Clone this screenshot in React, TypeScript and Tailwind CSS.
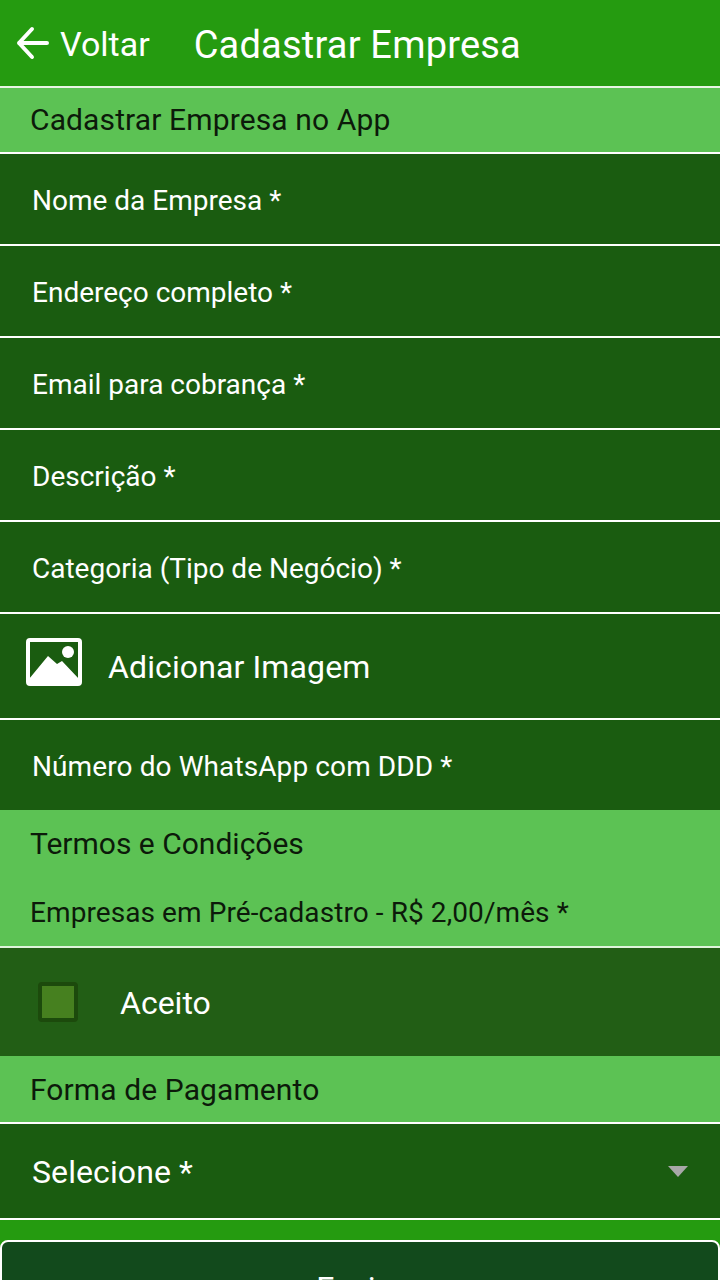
const FIELDS_TOP = [
  'Nome da Empresa *',
  'Endereço completo *',
  'Email para cobrança *',
  'Descrição *',
  'Categoria (Tipo de Negócio) *',
]

function Field({ label }: { label: string }) {
  return (
    <div className="flex h-[92px] items-center border-b-2 border-white bg-[#1a5c10] pl-8 pt-1 text-[28px] leading-none text-white">
      {label}
    </div>
  )
}

function ImageIcon() {
  return (
    <svg className="mb-2" width="56" height="48" viewBox="0 0 56 48">
      <rect x="2" y="2" width="52" height="44" rx="2" fill="none" stroke="#fff" strokeWidth="4" />
      <circle cx="42" cy="14" r="6" fill="#fff" />
      <path d="M3 41L22 18L31 26L36 23L53 41V46H3Z" fill="#fff" />
    </svg>
  )
}

export default function App() {
  return (
    <div className="h-[1280px] w-[720px] overflow-hidden bg-[#259b10] font-['Roboto',sans-serif]">
      {/* Header */}
      <div className="flex h-[88px] items-center border-b-2 border-[#e8f5e4] text-white">
        <svg className="ml-[16px]" width="34" height="34" viewBox="0 0 34 34" fill="none" stroke="#fff" strokeWidth="4" strokeLinecap="round" strokeLinejoin="round">
          <path d="M31 17H3M16 3L3 17L16 31" />
        </svg>
        <span className="ml-[10px] mt-[2px] text-[34px] leading-none">Voltar</span>
        <span className="ml-[44px] mt-[3px] text-[38px] leading-none tracking-[0.2px]">Cadastrar Empresa</span>
      </div>

      <div className="flex h-[66px] items-center border-b-2 border-white bg-[#5cc254] pl-[30px] text-[30px] leading-none tracking-[0.12px] text-[#0c1a0a]">
        Cadastrar Empresa no App
      </div>

      {FIELDS_TOP.map((label) => (
        <Field key={label} label={label} />
      ))}

      {/* Adicionar imagem */}
      <div className="flex h-[106px] items-center border-b-2 border-white bg-[#1a5c10] pl-[26px] text-white">
        <ImageIcon />
        <span className="ml-[26px] mt-[2px] text-[32px] leading-none tracking-[0.12px]">Adicionar Imagem</span>
      </div>

      <div className="flex h-[90px] items-center bg-[#1a5c10] pl-8 pt-1 text-[28px] leading-none tracking-[0.1px] text-white">
        Número do WhatsApp com DDD *
      </div>

      {/* Termos */}
      <div className="h-[138px] border-b-2 border-[#dff3db] bg-[#5cc254] pl-[30px] text-[#0c1a0a]">
        <div className="flex h-[68px] items-center text-[30px] leading-none">Termos e Condições</div>
        <div className="flex h-[68px] items-center pt-[2px] text-[28px] leading-none tracking-[0.08px]">Empresas em Pré-cadastro - R$ 2,00/mês *</div>
      </div>

      <div className="flex h-[108px] items-center bg-[#225e15] pl-[38px] text-white">
        <div className="h-10 w-10 rounded-[4px] border-4 border-[#1c4a0c] bg-[#46801f]" />
        <span className="ml-[42px] mt-[2px] text-[32px] leading-none">Aceito</span>
      </div>

      <div className="flex h-[68px] items-center border-b-2 border-white bg-[#5cc254] pl-[30px] pt-[2px] text-[30px] leading-none tracking-[0.1px] text-[#0c1a0a]">
        Forma de Pagamento
      </div>

      {/* Select */}
      <div className="flex h-[96px] items-center justify-between border-b-2 border-white bg-[#1a5c10] pl-8 pr-[32px] text-white">
        <span className="mt-[2px] text-[32px] leading-none tracking-[0.1px]">Selecione *</span>
        <svg width="20" height="11" viewBox="0 0 20 11">
          <path d="M0 0H20L10 11Z" fill="#a8a8a8" />
        </svg>
      </div>

      <div className="h-5" />

      <button className="flex h-[90px] w-full justify-center rounded-[8px] border-2 border-white bg-[#124a1c] pt-[30px] text-[32px] leading-none text-white">
        Enviar
      </button>
    </div>
  )
}
